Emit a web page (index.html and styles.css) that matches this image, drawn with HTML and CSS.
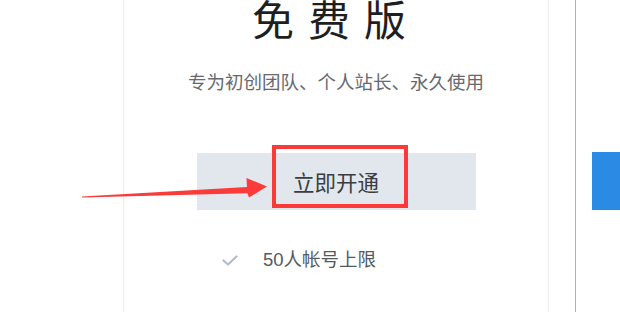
FILE: index.html
```html
<!DOCTYPE html>
<html lang="zh-CN">
<head>
<meta charset="utf-8">
<title>免费版</title>
<link rel="stylesheet" href="styles.css">
</head>
<body>
<div class="page">
  <div class="lead"></div>
  <section class="card">
    <h1 class="title">免费版</h1>
    <p class="subtitle">专为初创团队、个人站长、永久使用</p>
    <button class="btn-open">立即开通</button>
    <ul class="features">
      <li class="feature">
        <svg class="check" viewBox="0 0 16 11" width="16" height="11"><path d="M1.5 5.5 L6 9.5 L14.5 1.5" fill="none" stroke="#b3bccb" stroke-width="2.2" stroke-linecap="round" stroke-linejoin="round"/></svg>
        <span>50人帐号上限</span>
      </li>
    </ul>
  </section>
  <div class="gutter"></div>
  <section class="card-next">
    <div class="btn-blue"></div>
  </section>

  <div class="mark-box"></div>
  <svg class="mark-arrow" viewBox="0 0 620 312" width="620" height="312">
    <polygon points="82,196.6 247,187 246.5,178 267,186.5 249,197.5 247.5,193.2 82,197.6" fill="#fb3a3a"/>
  </svg>
</div>
</body>
</html>
```
FILE: styles.css
```css
html, body {
  margin: 0;
  padding: 0;
  background: #ffffff;
}
body {
  width: 620px;
  height: 312px;
  overflow: hidden;
  font-family: "Liberation Sans", "Noto Sans CJK SC", sans-serif;
}
.page {
  position: relative;
  display: flex;
  height: 312px;
}
.lead {
  width: 123px;
  flex: none;
}
.card {
  width: 426px;
  flex: none;
  box-sizing: border-box;
  border-left: 1px solid #eaecf1;
  border-right: 1px solid #eaecf1;
  display: flex;
  flex-direction: column;
  align-items: center;
}
.title {
  margin: 0;
  font-size: 42px;
  line-height: 44px;
  font-weight: 400;
  letter-spacing: 14px;
  color: #1f1f1f;
}
.subtitle {
  margin: 27px 0 0 0;
  font-size: 18.5px;
  line-height: 24px;
  color: #666a70;
}
.btn-open {
  margin-top: 58px;
  width: 279px;
  height: 57px;
  border: none;
  padding: 0;
  background: #e2e7ee;
  font-family: inherit;
  font-size: 21.5px;
  color: #3a3d42;
}
.features {
  align-self: flex-start;
  list-style: none;
  margin: 38px 0 0 98px;
  padding: 0;
}
.feature {
  display: flex;
  align-items: center;
  gap: 25px;
  font-size: 18.5px;
  line-height: 24px;
  color: #555a61;
}
.check {
  display: block;
  margin-top: 1px;
}
.gutter {
  width: 26px;
  flex: none;
}
.card-next {
  flex: 1;
  border-left: 1px solid #8db7ea;
  padding-left: 16px;
}
.btn-blue {
  margin-top: 152px;
  height: 58px;
  background: #2b8ae3;
}
.mark-box {
  position: absolute;
  left: 272px;
  top: 145px;
  width: 136px;
  height: 63px;
  box-sizing: border-box;
  border: 4px solid #fd3a3a;
}
.mark-arrow {
  position: absolute;
  left: 0;
  top: 0;
  pointer-events: none;
}
```
